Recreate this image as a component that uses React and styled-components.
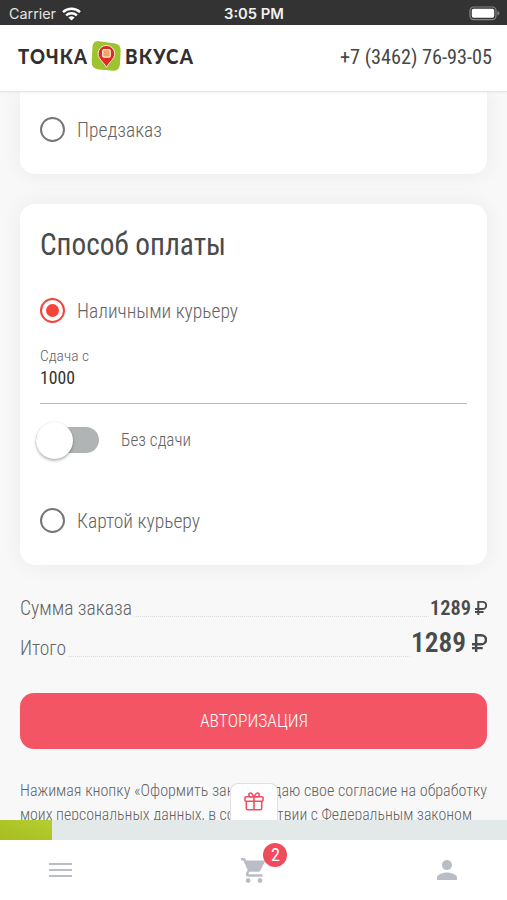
import React, { useLayoutEffect, useRef, useState } from "react";
import styled, { createGlobalStyle } from "styled-components";

const GlobalStyle = createGlobalStyle`
  * { box-sizing: border-box; }
  html, body { margin: 0; padding: 0; }
  body {
    font-family: "Roboto Condensed", Roboto, "Liberation Sans", sans-serif;
    font-stretch: 75%;
    color: #636363;
    background: #f8f8f8;
    overflow: hidden;
  }
`;

const FitBox = styled.span`
  display: block;
  flex: none;
  width: ${(p) => p.$width}px;
  height: ${(p) => p.$line}px;
  line-height: ${(p) => p.$line}px;
  font-size: ${(p) => p.$size}px;
  font-weight: ${(p) => p.$weight};
  color: ${(p) => p.$color};
  white-space: nowrap;
`;

const FitInner = styled.span`
  display: inline-block;
  transform-origin: 0 50%;
`;

/* Condenses a line of text horizontally so that it fills the given width. */
function Text({ width, size, line = 24, weight = 400, color = "#636363", children, ...rest }) {
  const ref = useRef(null);
  const [scale, setScale] = useState(1);
  useLayoutEffect(() => {
    const natural = ref.current.getBoundingClientRect().width / scale;
    if (natural) setScale(width / natural);
  }, [width, size, weight, children]);
  return (
    <FitBox $width={width} $size={size} $line={line} $weight={weight} $color={color} {...rest}>
      <FitInner ref={ref} style={{ transform: `scaleX(${scale})` }}>{children}</FitInner>
    </FitBox>
  );
}

const Screen = styled.div`
  width: 507px;
  height: 900px;
  display: flex;
  flex-direction: column;
  overflow: hidden;
`;

const StatusBar = styled.div`
  flex: none;
  height: 25px;
  padding: 2px 7px 0 9px;
  display: grid;
  grid-template-columns: 215px 1fr auto;
  align-items: center;
  background: #333;
  font-family: Inter, "Liberation Sans", sans-serif;
  font-stretch: 100%;
`;

const Carrier = styled.div`
  display: flex;
  align-items: center;
  gap: 6px;
`;

const Header = styled.header`
  flex: none;
  height: 67px;
  padding: 0 15px 2px 18px;
  display: flex;
  align-items: center;
  justify-content: space-between;
  background: #fff;
  border-bottom: 1px solid #e6e6e6;
  position: relative;
  box-shadow: 0 1px 2px rgba(0, 0, 0, 0.05);
`;

const Logo = styled.div`
  display: flex;
  align-items: center;
  gap: 3px;
  font-family: Lato, sans-serif;
  font-stretch: 100%;
  letter-spacing: 1.2px;
  padding-bottom: 2px;
`;

const Content = styled.main`
  height: 728px;
  flex: none;
  padding: 0 20px;
  overflow: hidden;
  background: #f8f8f8;
`;

const Card = styled.section`
  background: #fff;
  border-radius: ${(p) => (p.$cut ? "0 0 15px 15px" : "15px")};
  box-shadow: 0 0 22px rgba(0, 0, 0, 0.06);
  height: ${(p) => p.$height}px;
  margin-bottom: 30px;
  padding: ${(p) => p.$top}px 20px 0;
`;

const Option = styled.div`
  display: flex;
  align-items: center;
  gap: 12px;
  height: 25px;
`;

const Radio = styled.span`
  width: 25px;
  height: 25px;
  border-radius: 50%;
  border: 2px solid ${(p) => (p.$on ? "#f4433b" : "#767676")};
  display: grid;
  place-items: center;
  &::after {
    content: "";
    width: 13px;
    height: 13px;
    border-radius: 50%;
    background: ${(p) => (p.$on ? "#f4433b" : "transparent")};
  }
`;

const Title = styled.h2`
  margin: 0 0 35px;
  height: 36px;
`;

const Field = styled.div`
  margin-top: 24px;
  height: 57px;
  border-bottom: 1px solid #b9b9b9;
`;

const SwitchRow = styled.div`
  margin: 15px 0 0 -4px;
  height: 42px;
  display: flex;
  align-items: center;
  gap: 22px;
`;

const Track = styled.span`
  width: 63px;
  height: 26px;
  border-radius: 13px;
  background: #b1b4b5;
  display: flex;
  align-items: center;
`;

const Thumb = styled.span`
  flex: none;
  width: 37px;
  height: 37px;
  border-radius: 50%;
  background: #fff;
  box-shadow: 0 2px 3px rgba(0, 0, 0, 0.26), 0 0 2px rgba(0, 0, 0, 0.12);
`;

const CardOption = styled(Option)`
  margin-top: 47px;
`;

const Totals = styled.div`
  padding-top: 0;
`;

const TotalRow = styled.div`
  display: flex;
  align-items: flex-end;
  height: ${(p) => p.$height}px;
`;

const Leader = styled.span`
  flex: 1;
  margin: 0 1px 3px 2px;
  border-bottom: 1px dotted #dedede;
`;

const Price = styled.span`
  display: flex;
  align-items: center;
  gap: ${(p) => p.$gap}px;
  margin-bottom: ${(p) => p.$lift || 0}px;
`;

const Button = styled.button`
  display: flex;
  align-items: center;
  justify-content: center;
  width: 467px;
  height: 56px;
  margin: 33px 0 30px;
  padding: 0 0 1px;
  border: 0;
  border-radius: 14px;
  background: #f35565;
  font: inherit;
`;

const Progress = styled.div`
  flex: none;
  height: 20px;
  position: relative;
  background: #e2e9e8;
`;

const ProgressFill = styled.div`
  width: 52px;
  height: 20px;
  background: linear-gradient(20deg, #a7bd20, #b5ce30);
`;

const GiftTab = styled.div`
  position: absolute;
  left: 230px;
  bottom: 20px;
  width: 48px;
  height: 37px;
  padding-bottom: 2px;
  border: 1px solid #e0e0e0;
  border-bottom: 0;
  border-radius: 8px 8px 0 0;
  background: #fff;
  display: grid;
  place-items: center;
`;

const NavBar = styled.nav`
  flex: none;
  height: 60px;
  padding: 0 50px 0 49px;
  display: flex;
  align-items: center;
  justify-content: space-between;
  background: #fff;
`;

const CartSlot = styled.div`
  position: relative;
  width: 25px;
  height: 25px;
  margin-right: 2px;
`;

const Badge = styled.span`
  position: absolute;
  left: 22px;
  top: -15px;
  width: 24px;
  height: 24px;
  border-radius: 50%;
  background: #f14c5e;
  display: grid;
  place-items: center;
`;

const Icon = styled.svg`
  display: block;
  flex: none;
`;

const Wifi = () => (
  <Icon width="19" height="14" viewBox="0 0 19 14" fill="none" stroke="#fff" strokeWidth="2.4">
    <path d="M1 5.2a12.3 12.3 0 0 1 17 0" />
    <path d="M4.1 8.4a7.9 7.9 0 0 1 10.8 0" />
    <path d="M9.5 13.6 6.4 10.6a4.5 4.5 0 0 1 6.2 0z" fill="#fff" stroke="none" />
  </Icon>
);

const Battery = () => (
  <Icon width="31" height="15" viewBox="0 0 31 15">
    <rect x="1" y="1" width="26" height="12.6" rx="3.6" fill="none" stroke="#858585" strokeWidth="1.2" />
    <rect x="2.8" y="2.8" width="22.4" height="9" rx="1.8" fill="#fff" />
    <path d="M28.4 5v4.6q2-.6 2-2.3t-2-2.3z" fill="#858585" />
  </Icon>
);

const Pin = () => (
  <Icon width="31" height="32" viewBox="0 0 31 32">
    <path d="M8 1.200 23 3.200q6.900.8 6.700 7l-.7 13.600q-.5 7.600-7 7L8 29.400Q.3 28.600.7 22L1.400 7.600Q2 .4 8 1.200z" fill="#9dc430" />
    <path d="M15.400 5.400a8.300 8.300 0 0 0-8.300 8.400c0 5 5.700 8.400 8.300 13.600 2.600-5.200 8.300-8.600 8.300-13.600a8.300 8.300 0 0 0-8.300-8.400z" fill="#de2b25" stroke="#f8ecd0" strokeWidth="1" />
    <rect x="11.700" y="9.700" width="7.500" height="7.500" rx="1.400" fill="#f3a35b" stroke="#fff2db" strokeWidth="1.200" />
  </Icon>
);

const Ruble = ({ width, height, stroke }) => (
  <Icon width={width} height={height} viewBox="0 0 12 15" fill="none" stroke="#4a4b4d" strokeWidth={stroke} preserveAspectRatio="none">
    <path d="M3.300 15V1h4.100a3.600 3.600 0 0 1 0 7.600H0M0 11.800h8.600" />
  </Icon>
);

const Gift = () => (
  <Icon width="20" height="19" viewBox="0 0 20 19" fill="none" stroke="#ed5062" strokeWidth="1.600" strokeLinejoin="round">
    <rect x="1" y="4.800" width="18" height="4.400" rx="1" />
    <path d="M2.300 9.200v7.100q0 1.400 1.400 1.400h12.600q1.400 0 1.400-1.400V9.200M10 4.800v12.900M10 4.800C8.800 2.400 7.600 1 6.400 1c-2 0-2.200 3.800 0 3.800zM10 4.800c1.200-2.400 2.400-3.800 3.600-3.800 2 0 2.200 3.800 0 3.800z" />
  </Icon>
);

const Menu = () => (
  <Icon width="23" height="16" viewBox="0 0 23 16" stroke="#babdc5" strokeWidth="2">
    <path d="M0 2h23M0 8h23M0 14h23" />
  </Icon>
);

const Cart = () => (
  <Icon width="25" height="25" viewBox="1 2 21 20" preserveAspectRatio="none" fill="#babdc5">
    <path d="M7 18c-1.100 0-1.990.9-1.990 2S5.900 22 7 22s2-.9 2-2-.9-2-2-2zM1 2v2h2l3.600 7.590-1.350 2.450c-.16.280-.25.610-.25.960 0 1.100.9 2 2 2h12v-2H7.420c-.14 0-.25-.11-.25-.25l.03-.12.900-1.630h7.450c.75 0 1.410-.41 1.750-1.030l3.580-6.490A1.003 1.003 0 0 0 20 4H5.210l-.94-2H1zm16 16c-1.100 0-1.990.9-1.990 2s.89 2 1.990 2 2-.9 2-2-.9-2-2-2z" />
  </Icon>
);

const Person = () => (
  <Icon width="20" height="20" viewBox="4 4 16 16" fill="#babdc5">
    <path d="M12 12c2.210 0 4-1.790 4-4s-1.790-4-4-4-4 1.790-4 4 1.790 4 4 4zm0 2c-2.670 0-8 1.340-8 4v2h16v-2c0-2.660-5.330-4-8-4z" />
  </Icon>
);

export default function App() {
  return (
    <Screen>
      <GlobalStyle />
      <StatusBar>
        <Carrier>
          <Text width={47} size={14} line={22} color="#e4e4e4">Carrier</Text>
          <Wifi />
        </Carrier>
        <Text width={60} size={14} line={22} weight={600} color="#f1f1f1">3:05 PM</Text>
        <Battery />
      </StatusBar>
      <Header>
        <Logo>
          <Text width={70} size={20} weight={900} color="#303030">ТОЧКА</Text>
          <Pin />
          <Text width={69} size={20} weight={900} color="#303030">ВКУСА</Text>
        </Logo>
        <Text width={152} size={20} color="#474747">+7 (3462) 76-93-05</Text>
      </Header>
      <Content>
        <Card $cut $height={82} $top={25}>
          <Option>
            <Radio />
            <Text width={85} size={20} weight={300}>Предзаказ</Text>
          </Option>
        </Card>
        <Card $height={361} $top={23}>
          <Title><Text width={186} size={30.500} line={36} color="#4a4b4d">Способ оплаты</Text></Title>
          <Option>
            <Radio $on />
            <Text width={161} size={20} weight={300}>Наличными курьеру</Text>
          </Option>
          <Field>
            <Text width={49} size={14.500} line={20} weight={350}>Сдача с</Text>
            <Text width={35} size={17.500} line={23} color="#333">1000</Text>
          </Field>
          <SwitchRow>
            <Track><Thumb /></Track>
            <Text width={70} size={17.500} weight={300}>Без сдачи</Text>
          </SwitchRow>
          <CardOption>
            <Radio />
            <Text width={123} size={20} weight={300}>Картой курьеру</Text>
          </CardOption>
        </Card>
        <Totals>
          <TotalRow $height={25}>
            <Text width={112} size={20} weight={300}>Сумма заказа</Text>
            <Leader />
            <Price $gap={4}>
              <Text width={41} size={20} weight={600} color="#4a4b4d">1289</Text>
              <Ruble width={12} height={14} stroke={2} />
            </Price>
          </TotalRow>
          <TotalRow $height={40}>
            <Text width={46} size={20} weight={300}>Итого</Text>
            <Leader />
            <Price $gap={6} $lift={2}>
              <Text width={55} size={27.500} line={30} weight={600} color="#4a4b4d">1289</Text>
              <Ruble width={15} height={18} stroke={2} />
            </Price>
          </TotalRow>
        </Totals>
        <Button type="button">
          <Text width={108} size={17.500} weight={350} color="#fff">АВТОРИЗАЦИЯ</Text>
        </Button>
        <Text width={467} size={16} line={23.500} weight={300}>Нажимая кнопку «Оформить заказ», я даю свое согласие на обработку</Text>
        <Text width={452} size={16} line={23.500} weight={300}>моих персональных данных, в соответствии с Федеральным законом</Text>
      </Content>
      <Progress>
        <ProgressFill />
        <GiftTab><Gift /></GiftTab>
      </Progress>
      <NavBar>
        <Menu />
        <CartSlot>
          <Cart />
          <Badge><Text width={9} size={18} color="#fff">2</Text></Badge>
        </CartSlot>
        <Person />
      </NavBar>
    </Screen>
  );
}
